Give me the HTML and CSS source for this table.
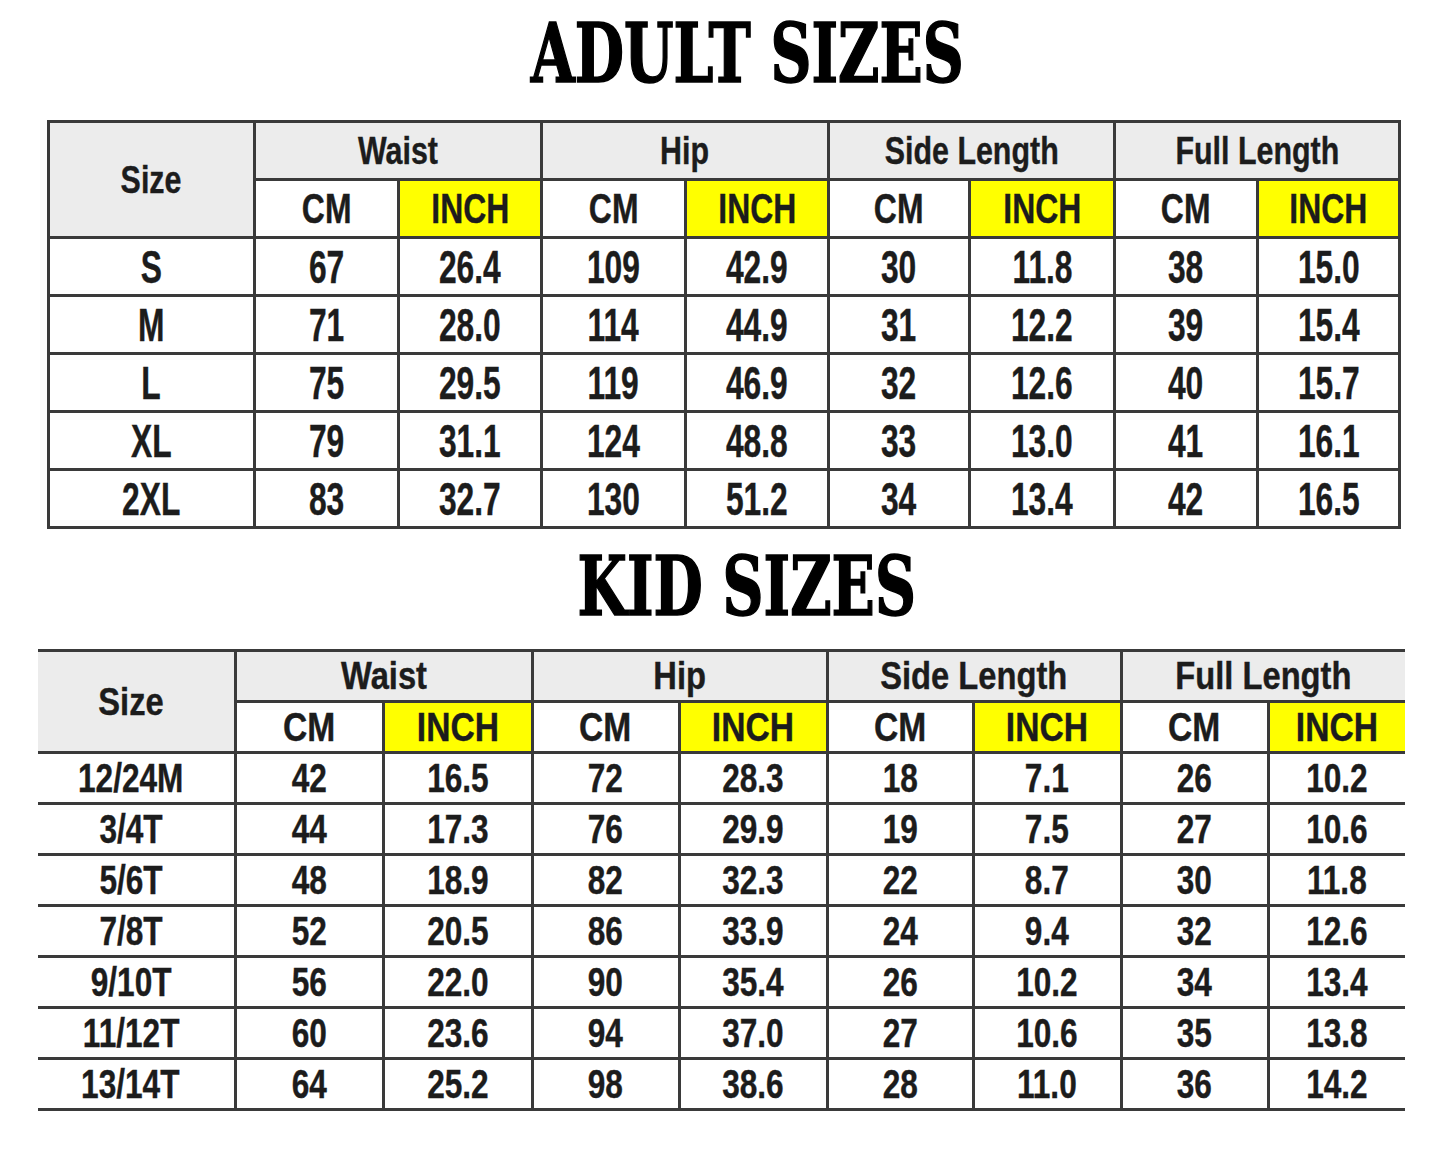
FILE: index.html
```html
<!DOCTYPE html>
<html lang="en">
<head>
<meta charset="utf-8">
<title>Size Chart</title>
<link rel="stylesheet" href="styles.css">
</head>
<body>
<main class="page">
  <h1 class="title title-adult"><span class="title-text">ADULT SIZES</span></h1>
  <table class="chart adult">
    <colgroup>
      <col class="w0"><col class="w1"><col class="w2"><col class="w3"><col class="w4"><col class="w5"><col class="w6"><col class="w7"><col class="w8">
    </colgroup>
    <thead>
      <tr class="hr1">
        <th rowspan="2" class="gray size-h"><span>Size</span></th>
        <th colspan="2" class="gray"><span>Waist</span></th>
        <th colspan="2" class="gray"><span>Hip</span></th>
        <th colspan="2" class="gray"><span>Side Length</span></th>
        <th colspan="2" class="gray"><span>Full Length</span></th>
      </tr>
      <tr class="hr2">
        <th><span>CM</span></th><th class="yel"><span>INCH</span></th>
        <th><span>CM</span></th><th class="yel"><span>INCH</span></th>
        <th><span>CM</span></th><th class="yel"><span>INCH</span></th>
        <th><span>CM</span></th><th class="yel"><span>INCH</span></th>
      </tr>
    </thead>
    <tbody>
      <tr><td><span>S</span></td><td><span>67</span></td><td><span>26.4</span></td><td><span>109</span></td><td><span>42.9</span></td><td><span>30</span></td><td><span>11.8</span></td><td><span>38</span></td><td><span>15.0</span></td></tr>
      <tr><td><span>M</span></td><td><span>71</span></td><td><span>28.0</span></td><td><span>114</span></td><td><span>44.9</span></td><td><span>31</span></td><td><span>12.2</span></td><td><span>39</span></td><td><span>15.4</span></td></tr>
      <tr><td><span>L</span></td><td><span>75</span></td><td><span>29.5</span></td><td><span>119</span></td><td><span>46.9</span></td><td><span>32</span></td><td><span>12.6</span></td><td><span>40</span></td><td><span>15.7</span></td></tr>
      <tr><td><span>XL</span></td><td><span>79</span></td><td><span>31.1</span></td><td><span>124</span></td><td><span>48.8</span></td><td><span>33</span></td><td><span>13.0</span></td><td><span>41</span></td><td><span>16.1</span></td></tr>
      <tr><td><span>2XL</span></td><td><span>83</span></td><td><span>32.7</span></td><td><span>130</span></td><td><span>51.2</span></td><td><span>34</span></td><td><span>13.4</span></td><td><span>42</span></td><td><span>16.5</span></td></tr>
    </tbody>
  </table>

  <h1 class="title title-kid"><span class="title-text">KID SIZES</span></h1>
  <table class="chart kid">
    <colgroup>
      <col class="w0"><col class="w1"><col class="w2"><col class="w3"><col class="w4"><col class="w5"><col class="w6"><col class="w7"><col class="w8">
    </colgroup>
    <thead>
      <tr class="hr1">
        <th rowspan="2" class="gray size-h"><span>Size</span></th>
        <th colspan="2" class="gray"><span>Waist</span></th>
        <th colspan="2" class="gray"><span>Hip</span></th>
        <th colspan="2" class="gray"><span>Side Length</span></th>
        <th colspan="2" class="gray"><span>Full Length</span></th>
      </tr>
      <tr class="hr2">
        <th><span>CM</span></th><th class="yel"><span>INCH</span></th>
        <th><span>CM</span></th><th class="yel"><span>INCH</span></th>
        <th><span>CM</span></th><th class="yel"><span>INCH</span></th>
        <th><span>CM</span></th><th class="yel"><span>INCH</span></th>
      </tr>
    </thead>
    <tbody>
      <tr><td><span>12/24M</span></td><td><span>42</span></td><td><span>16.5</span></td><td><span>72</span></td><td><span>28.3</span></td><td><span>18</span></td><td><span>7.1</span></td><td><span>26</span></td><td><span>10.2</span></td></tr>
      <tr><td><span>3/4T</span></td><td><span>44</span></td><td><span>17.3</span></td><td><span>76</span></td><td><span>29.9</span></td><td><span>19</span></td><td><span>7.5</span></td><td><span>27</span></td><td><span>10.6</span></td></tr>
      <tr><td><span>5/6T</span></td><td><span>48</span></td><td><span>18.9</span></td><td><span>82</span></td><td><span>32.3</span></td><td><span>22</span></td><td><span>8.7</span></td><td><span>30</span></td><td><span>11.8</span></td></tr>
      <tr><td><span>7/8T</span></td><td><span>52</span></td><td><span>20.5</span></td><td><span>86</span></td><td><span>33.9</span></td><td><span>24</span></td><td><span>9.4</span></td><td><span>32</span></td><td><span>12.6</span></td></tr>
      <tr><td><span>9/10T</span></td><td><span>56</span></td><td><span>22.0</span></td><td><span>90</span></td><td><span>35.4</span></td><td><span>26</span></td><td><span>10.2</span></td><td><span>34</span></td><td><span>13.4</span></td></tr>
      <tr><td><span>11/12T</span></td><td><span>60</span></td><td><span>23.6</span></td><td><span>94</span></td><td><span>37.0</span></td><td><span>27</span></td><td><span>10.6</span></td><td><span>35</span></td><td><span>13.8</span></td></tr>
      <tr><td><span>13/14T</span></td><td><span>64</span></td><td><span>25.2</span></td><td><span>98</span></td><td><span>38.6</span></td><td><span>28</span></td><td><span>11.0</span></td><td><span>36</span></td><td><span>14.2</span></td></tr>
    </tbody>
  </table>
</main>
</body>
</html>
```
FILE: styles.css
```css
* { box-sizing: border-box; }
html, body { margin: 0; padding: 0; background: #ffffff; }
body { width: 1445px; height: 1162px; overflow: hidden; }

.page { display: flex; flex-direction: column; }

.title {
  margin: 0;
  text-align: center;
  font-family: "DejaVu Serif Condensed", "DejaVu Serif", serif;
  font-weight: 900;
  font-size: 82px;
  line-height: 1;
  color: #000;
  padding-left: 49px;
  -webkit-text-stroke: 1.5px #000;
}
.title-text { display: inline-block; transform: scaleX(0.77); }
.title-adult { height: 120px; padding-top: 12px; }
.title-kid { height: 120px; padding-top: 16px; }

.chart {
  border-collapse: collapse;
  table-layout: fixed;
  font-family: "Liberation Sans", Arial, sans-serif;
  font-weight: bold;
  color: #1c1c1c;
  text-align: center;
  -webkit-text-stroke: 0.4px #1c1c1c;
}
.chart th, .chart td {
  padding: 0;
  text-align: center;
  vertical-align: middle;
  white-space: nowrap;
  background: #fff;
  line-height: 1;
  overflow: visible;
}
.chart th { font-weight: bold; }
.chart span { display: inline-block; transform-origin: 50% 50%; }
.chart .gray { background: #ececec; }
.chart .yel { background: #ffff00; }

/* adult */
.adult { margin-left: 47px; width: 1351px; }
.adult th, .adult td { border: 3px solid #3a3a3a; height: 58px; }
.adult .hr1 th { font-size: 38px; }
.adult .hr1 th span { transform: scaleX(0.80); }
.adult .hr2 th { font-size: 42px; }
.adult .hr2 th span { transform: scaleX(0.76); }
.adult td { font-size: 46px; }
.adult td span { transform: scaleX(0.69); }
.adult col.w0 { width: 206px; }
.adult col.w1 { width: 144px; }
.adult col.w2 { width: 143px; }
.adult col.w3 { width: 144px; }
.adult col.w4 { width: 143px; }
.adult col.w5 { width: 141px; }
.adult col.w6 { width: 145px; }
.adult col.w7 { width: 143px; }
.adult col.w8 { width: 142px; }

/* kid */
.kid { margin-left: 38px; width: 1367px; }
.kid th, .kid td { border: 3px solid #3a3a3a; height: 51px; }
.kid tr > :first-child { border-left: none; }
.kid tr > :last-child { border-right: none; }
.kid .hr2 > :first-child { border-left: 3px solid #3a3a3a; }
.kid .size-h, .kid tbody td:first-child { padding-right: 10px; }
.kid .hr1 th { font-size: 38px; }
.kid .hr1 th span { transform: scaleX(0.86); }
.kid .hr2 th { font-size: 40px; }
.kid .hr2 th span { transform: scaleX(0.84); }
.kid td { font-size: 40px; }
.kid td span { transform: scaleX(0.79); }
.kid col.w0 { width: 197px; }
.kid col.w1 { width: 148px; }
.kid col.w2 { width: 149px; }
.kid col.w3 { width: 147px; }
.kid col.w4 { width: 148px; }
.kid col.w5 { width: 146px; }
.kid col.w6 { width: 148px; }
.kid col.w7 { width: 147px; }
.kid col.w8 { width: 137px; }
```
